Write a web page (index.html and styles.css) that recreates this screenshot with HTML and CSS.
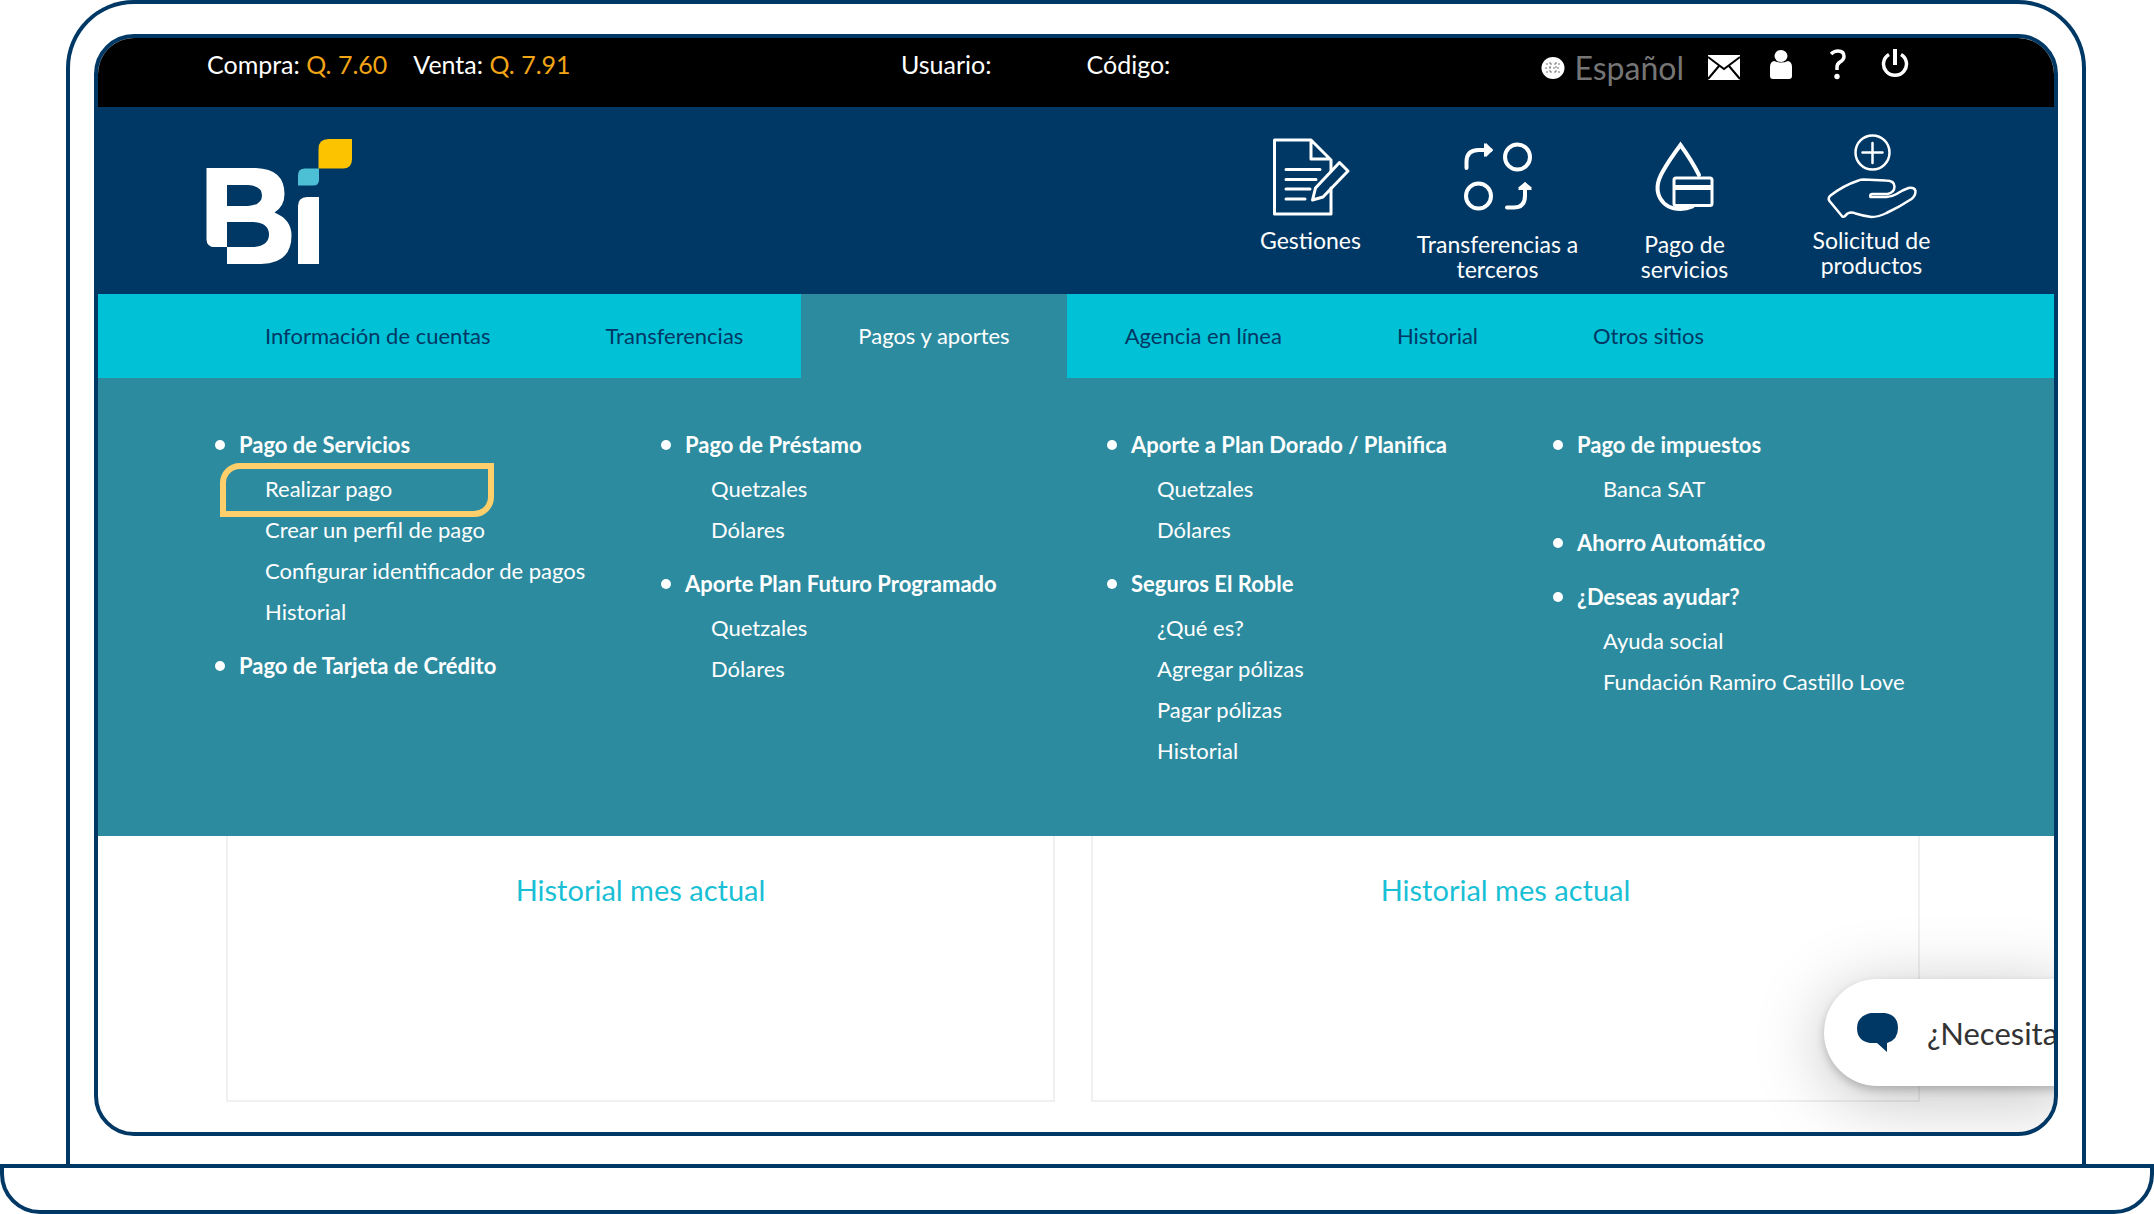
FILE: index.html
```html
<!DOCTYPE html>
<html lang="es">
<head>
<meta charset="utf-8">
<meta name="viewport" content="width=device-width, initial-scale=1">
<title>Banca en línea</title>
<link rel="stylesheet" href="styles.css">
</head>
<body>
<div class="laptop">
  <div class="lid">
    <div class="screen">
      <div class="topbar">
        <p class="rates">
          <span>Compra: <span class="rate">Q. 7.60</span></span>
          <span>Venta: <span class="rate">Q. 7.91</span></span>
        </p>
        <p class="session"><span>Usuario:</span><span>Código:</span></p>
        <div class="tools">
          <button class="language" type="button">
            <svg width="24" height="24" viewBox="0 0 24 24" aria-hidden="true"><ellipse cx="12" cy="12" rx="11.500" ry="11" fill="#fff"/><path d="M5 8h14M4 12h16M5 16h14M9 6v12M15 6v12" stroke="#777" stroke-width="1" stroke-dasharray="2 2" fill="none"/></svg>
            Español
          </button>
          <a class="tool" href="#mensajes" aria-label="Mensajes">
            <svg width="34" height="32" viewBox="0 0 34 32" aria-hidden="true"><path d="M1 6h32v25H1z" fill="#fff"/><path d="M1 8l16 12L33 8M1 30l11-13M33 30L22 17" stroke="#000" stroke-width="2" fill="none"/></svg>
          </a>
          <a class="tool" href="#perfil" aria-label="Perfil">
            <svg width="24" height="32" viewBox="0 0 24 32" aria-hidden="true"><ellipse cx="12" cy="7" rx="6.500" ry="6" fill="#fff"/><path d="M5 12q7 3 14 0 4 1 4 6v9q0 3-3 3H4q-3 0-3-3v-9q0-5 4-6z" fill="#fff"/></svg>
          </a>
          <a class="tool" href="#ayuda" aria-label="Ayuda">
            <svg width="18" height="32" viewBox="0 0 18 32" aria-hidden="true"><path d="M2 5q3-3 7-3 6 0 6 5.500 0 3-4 5.500-3 2-3 5v3" stroke="#fff" stroke-width="3.500" fill="none"/><circle cx="8" cy="27.500" r="2.700" fill="#fff"/></svg>
          </a>
          <a class="tool" href="#salir" aria-label="Salir">
            <svg width="28" height="32" viewBox="0 0 28 32" aria-hidden="true"><path d="M8 5.500a11.500 11.200 0 1 0 12 0" stroke="#fff" stroke-width="3.500" fill="none"/><path d="M14 0v16" stroke="#fff" stroke-width="4"/></svg>
          </a>
        </div>
      </div>

      <header class="header">
        <a class="brand" href="#inicio" aria-label="Bi">
          <svg width="148" height="127" viewBox="206 138 148 127" aria-hidden="true">
            <path fill="#fff" fill-rule="evenodd" d="M206.500 168H256q28.500 1 28.500 26 0 12-10 18.500 17 7 17 23 0 28-30.500 28.500H227v-16.500h-12q-8.500-1-8.500-8zM227 185v21h21q14-1 14-10.500T248 185zM227 222v25h26q16-1 16-12.500T253 222z"/>
            <path fill="#003865" d="M206 247h21v1h-21z"/>
            <path fill="#fff" d="M298 264v-58q0-8.500 9-9h12v67z"/>
            <path fill="#4dc0d6" d="M298 185.500V175q0-6.500 7-6.500h14V180q0 5.500-6 5.500z"/>
            <path fill="#fcc300" d="M318.500 168.500V149q0-10 10-10H352v20q0 9.500-9 9.500z"/>
          </svg>
        </a>
        <nav class="shortcuts" aria-label="Accesos directos">
          <a class="shortcut" href="#gestiones">
            <svg width="92" height="92" viewBox="1265 129 92 92" aria-hidden="true"><g fill="none" stroke="#fff" stroke-width="3" stroke-linejoin="round" stroke-linecap="round"><path d="M1331 160l-20-20h-36.500v74H1331V188M1331 171v-11M1311 140v19h19"/><path d="M1286 169.500h34M1286 179.500h30M1286 189h24M1286 199h19"/><path d="M1312.500 200l3-12 24-25.500 8.500 8.500-25 26z"/></g></svg>
            <span>Gestiones</span>
          </a>
          <a class="shortcut" href="#terceros">
            <svg width="92" height="96" viewBox="1452 129 92 96" aria-hidden="true"><g fill="none" stroke="#fff" stroke-width="4" stroke-linecap="round"><circle cx="1517.500" cy="157" r="12.500"/><circle cx="1478.500" cy="196" r="12.500"/><path d="M1466.500 168v-6q0-12 12-12h12"/><path d="M1507 207.500h7q11 0 11-12v-9"/></g><path fill="#fff" d="M1484 143l9 7.500-9 6.500zM1518 190l7-8 7 8z"/><path d="M1485 144l6 6-6 6M1519 189l6-5 6 5" fill="none" stroke="#fff" stroke-width="3"/></svg>
            <span>Transferencias a<br>terceros</span>
          </a>
          <a class="shortcut" href="#servicios">
            <svg width="92" height="96" viewBox="1639 129 92 96" aria-hidden="true"><g fill="none" stroke="#fff" stroke-width="4" stroke-linecap="round"><path d="M1699 175q-7-14-18.500-30-12 16-18 27c-12 21 0 37 18 37q6 0 12-2.500"/><rect x="1674" y="178" width="38" height="27.500" rx="2" stroke-width="3" fill="#003865"/><path d="M1675 187.500h36" stroke-width="5" stroke-linecap="butt"/></g></svg>
            <span>Pago de<br>servicios</span>
          </a>
          <a class="shortcut" href="#productos">
            <svg width="92" height="92" viewBox="1827 129 92 92" aria-hidden="true"><g fill="none" stroke="#fff" stroke-width="2.500" stroke-linecap="round" stroke-linejoin="round"><circle cx="1873.500" cy="152.500" r="17"/><path d="M1873.500 143v20M1863.500 152.500h20"/><path d="M1830.500 201q-2-3 1-5.500 13-10 28-15 2-1 5-1l22 1q9 0 9 6 0 6-7 7.500h-15q-3 0-2 3h16q5 0 10-3 6-4 12-6 6-1 7 3 0 5-4 8-12 8-25 14-8 4-15 4-8-1-16-3.500-4-2-8 0l-3 3q-2 1-3-1z"/></g></svg>
            <span>Solicitud de<br>productos</span>
          </a>
        </nav>
      </header>

      <nav class="tabs" aria-label="Principal">
        <a class="tab" href="#cuentas">Información de cuentas</a>
        <a class="tab" href="#transferencias">Transferencias</a>
        <a class="tab tab-active" href="#pagos" aria-current="page">Pagos y aportes</a>
        <a class="tab" href="#agencia">Agencia en línea</a>
        <a class="tab" href="#historial">Historial</a>
        <a class="tab" href="#otros">Otros sitios</a>
      </nav>

      <div class="menu">
        <ul class="groups">
          <li><a class="title" href="#">Pago de Servicios</a>
            <ul class="links">
              <li><a class="highlight" href="#">Realizar pago</a></li>
              <li><a href="#">Crear un perfil de pago</a></li>
              <li><a href="#">Configurar identificador de pagos</a></li>
              <li><a href="#">Historial</a></li>
            </ul>
          </li>
          <li><a class="title" href="#">Pago de Tarjeta de Crédito</a></li>
        </ul>
        <ul class="groups">
          <li><a class="title" href="#">Pago de Préstamo</a>
            <ul class="links">
              <li><a href="#">Quetzales</a></li>
              <li><a href="#">Dólares</a></li>
            </ul>
          </li>
          <li><a class="title" href="#">Aporte Plan Futuro Programado</a>
            <ul class="links">
              <li><a href="#">Quetzales</a></li>
              <li><a href="#">Dólares</a></li>
            </ul>
          </li>
        </ul>
        <ul class="groups">
          <li><a class="title" href="#">Aporte a Plan Dorado / Planifica</a>
            <ul class="links">
              <li><a href="#">Quetzales</a></li>
              <li><a href="#">Dólares</a></li>
            </ul>
          </li>
          <li><a class="title" href="#">Seguros El Roble</a>
            <ul class="links">
              <li><a href="#">¿Qué es?</a></li>
              <li><a href="#">Agregar pólizas</a></li>
              <li><a href="#">Pagar pólizas</a></li>
              <li><a href="#">Historial</a></li>
            </ul>
          </li>
        </ul>
        <ul class="groups">
          <li><a class="title" href="#">Pago de impuestos</a>
            <ul class="links">
              <li><a href="#">Banca SAT</a></li>
            </ul>
          </li>
          <li><a class="title" href="#">Ahorro Automático</a></li>
          <li><a class="title" href="#">¿Deseas ayudar?</a>
            <ul class="links">
              <li><a href="#">Ayuda social</a></li>
              <li><a href="#">Fundación Ramiro Castillo Love</a></li>
            </ul>
          </li>
        </ul>
      </div>

      <main class="cards">
        <section class="card"><h2>Historial mes actual</h2></section>
        <section class="card"><h2>Historial mes actual</h2></section>
      </main>

      <button class="chat" type="button">
        <svg width="42" height="40" viewBox="0 0 42 40" aria-hidden="true"><path fill="#003865" d="M14 0h14q13 2 13 15 0 12-11 15v9l-10-9h-7Q0 28 0 15 0 3 14 0z"/></svg>
        <span>¿Necesita</span>
      </button>
    </div>
  </div>
  <div class="base"></div>
</div>
</body>
</html>
```

FILE: styles.css
```css
*,
*::before,
*::after {
  box-sizing: border-box;
}

body {
  margin: 0;
  background: #fff;
  color: #fff;
  font: 22px/25px Lato, "Open Sans", sans-serif;
}

ul,
p,
h2 {
  margin: 0;
  padding: 0;
  list-style: none;
}

a {
  color: inherit;
  text-decoration: none;
}

button {
  border: 0;
  padding: 0;
  background: none;
  font-family: inherit;
  cursor: pointer;
}

svg {
  display: block;
  flex: none;
}

/* Laptop frame */
.laptop {
  display: flex;
  flex-direction: column;
  min-height: 100vh;
}

.lid {
  display: flex;
  flex: 1;
  margin: 0 68px 0 66px;
  padding: 30px 24px 28px;
  border: 4px solid #003865;
  border-bottom: 0;
  border-radius: 68px 68px 0 0;
}

.screen {
  position: relative;
  display: flex;
  flex: 1;
  flex-direction: column;
  overflow: hidden;
  border: 4px solid #003865;
  border-radius: 40px;
}

.base {
  height: 50px;
  border: 4px solid #003865;
  border-radius: 0 0 40px 40px;
}

/* Top bar */
.topbar {
  display: grid;
  grid-template-columns: 694px 1fr auto;
  padding: 9px 142px 0 109px;
  height: 69px;
  background: #000;
  font-size: 25px;
  line-height: 34px;
}

.rates {
  display: flex;
  gap: 26px;
}

.rate {
  color: #f2a516;
}

.session {
  display: flex;
  gap: 95px;
}

.tools {
  display: flex;
  align-items: flex-start;
  gap: 23px;
}

.tool {
  display: flex;
  justify-content: center;
  width: 34px;
  padding-top: 2px;
}

.language {
  display: flex;
  align-items: center;
  gap: 10px;
  color: #757575;
  font-size: 32px;
  line-height: 42px;
}

/* Header */
.header {
  display: flex;
  justify-content: space-between;
  height: 187px;
  padding: 22px 89px 0 108px;
  background: #003865;
}

.brand {
  padding-top: 9px;
}

.shortcuts {
  display: grid;
  grid-template-columns: repeat(4, 187px);
}

.shortcut {
  display: flex;
  flex-direction: column;
  align-items: center;
  gap: 7px;
  font-size: 23px;
  text-align: center;
}

/* Tabs */
.tabs {
  display: flex;
  gap: 1px;
  padding-left: 110px;
  background: #00c1d5;
  color: #003865;
}

.tab {
  padding: 0 57px;
  line-height: 84px;
}

.tab-active {
  background: #2d8b9f;
  color: #fff;
}

/* Menu */
.menu {
  display: grid;
  grid-template-columns: repeat(4, 1fr);
  padding: 46px 62px 65px 110px;
  background: #2d8b9f;
  line-height: 41px;
}

.groups {
  display: flex;
  flex-direction: column;
  gap: 13px;
}

.title {
  display: flex;
  align-items: center;
  gap: 14px;
  padding-left: 7px;
  font-weight: 700;
}

.title::before {
  content: "";
  width: 10px;
  height: 10px;
  border-radius: 50%;
  background: #fff;
}

.links {
  padding: 3px 0 0 57px;
}

.highlight {
  position: relative;
}

.highlight::after {
  content: "";
  position: absolute;
  top: -12px;
  left: -45px;
  width: 274px;
  height: 54px;
  border: 6px solid #ffcf6b;
  border-radius: 20px 0;
}

/* Cards */
.cards {
  display: grid;
  flex: 1;
  grid-template-columns: 1fr 1fr;
  gap: 36px;
  padding: 0 134px 30px 128px;
}

.card {
  min-height: 266px;
  padding-top: 35px;
  border: 2px solid #f0f0f0;
  border-top: 0;
}

h2 {
  color: #19bfd5;
  font-size: 29px;
  font-weight: 400;
  line-height: 38px;
  text-align: center;
}

/* Chat button */
.chat {
  position: absolute;
  right: -20px;
  bottom: 46px;
  display: flex;
  align-items: center;
  gap: 28px;
  width: 250px;
  height: 107px;
  padding-left: 33px;
  border-radius: 54px 0 0 54px;
  background: #fff;
  box-shadow: 0 4px 8px rgba(0, 0, 0, 0.2), 0 12px 70px rgba(0, 0, 0, 0.25);
  color: #333;
  font-size: 31px;
  line-height: 38px;
  white-space: nowrap;
}
```
